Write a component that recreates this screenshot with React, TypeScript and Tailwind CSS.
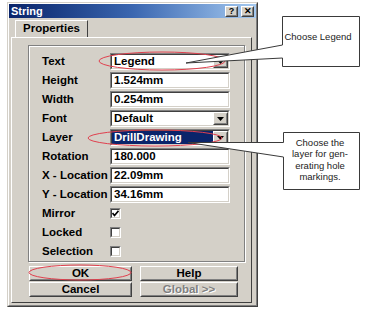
import React from "react";

const font = { fontFamily: '"Liberation Sans", Arial, sans-serif' };

function Sunken({ children, className = "" }: { children?: React.ReactNode; className?: string }) {
    return (
        <div className={`border border-t-[#808080] border-l-[#808080] border-r-white border-b-white ${className}`}>
            <div className="h-full border border-t-[#404040] border-l-[#404040] border-r-[#d4d0c8] border-b-[#d4d0c8]">
                {children}
            </div>
        </div>
    );
}

function Raised({ children, className = "" }: { children?: React.ReactNode; className?: string }) {
    return (
        <div className={`border border-t-white border-l-white border-r-[#404040] border-b-[#404040] bg-[#d4d0c8] ${className}`}>
            <div className="h-full border border-transparent border-r-[#808080] border-b-[#808080] flex items-center justify-center">
                {children}
            </div>
        </div>
    );
}

function Arrow() {
    return (
        <Raised className="w-[15px] h-full">
            <svg width="7" height="4" viewBox="0 0 7 4">
                <path d="M0 0h7L3.5 4z" fill="#000" />
            </svg>
        </Raised>
    );
}

function Field({ value, combo, selected }: { value: string; combo?: boolean; selected?: boolean }) {
    return (
        <Sunken className="w-[120px] h-[17px]">
            <div className="flex h-full bg-white">
                <div className={`flex-1 flex items-center pl-[2px] text-[11.5px] font-bold leading-none ${selected ? "bg-[#0a246a] text-white" : "text-black"}`}>
                    {value}
                </div>
                {combo && <Arrow />}
            </div>
        </Sunken>
    );
}

function Check({ checked }: { checked?: boolean }) {
    return (
        <Sunken className="w-[11px] h-[11px]">
            <div className="h-full bg-white flex items-center justify-center">
                {checked && (
                    <svg width="7" height="7" viewBox="0 0 7 7">
                        <path d="M0.5 3 L2.5 5.5 L6.5 0.8" stroke="#000" strokeWidth="1.6" fill="none" />
                    </svg>
                )}
            </div>
        </Sunken>
    );
}

const rows: { label: string; value?: string; combo?: boolean; selected?: boolean; check?: boolean; checked?: boolean }[] = [
    { label: "Text", value: "Legend", combo: true },
    { label: "Height", value: "1.524mm" },
    { label: "Width", value: "0.254mm" },
    { label: "Font", value: "Default", combo: true },
    { label: "Layer", value: "DrillDrawing", combo: true, selected: true },
    { label: "Rotation", value: "180.000" },
    { label: "X - Location", value: "22.09mm" },
    { label: "Y - Location", value: "34.16mm" },
    { label: "Mirror", check: true, checked: true },
    { label: "Locked", check: true },
    { label: "Selection", check: true },
];

export default function App() {
    return (
        <div className="relative w-[371px] h-[310px] bg-white overflow-hidden" style={font}>
            <div className="ml-[7px] mt-[2px] w-[251px] h-[305px] bg-[#d4d0c8] border border-t-[#d4d0c8] border-l-[#d4d0c8] border-r-[#404040] border-b-[#404040]">
                <div className="h-full border border-t-white border-l-white border-r-[#808080] border-b-[#808080] flex flex-col">
                    {/* title bar */}
                    <div className="h-[14px] bg-gradient-to-r from-[#0a246a] via-[#3a66b0] to-[#a6caf0] flex items-center pl-[2px] pr-[2px]">
                        <span className="text-white font-bold text-[11px] leading-none">String</span>
                        <div className="ml-auto flex gap-[3px]">
                            <Raised className="w-[13px] h-[11px]">
                                <span className="text-[9px] font-bold leading-none">?</span>
                            </Raised>
                            <Raised className="w-[13px] h-[11px]">
                                <span className="text-[9px] font-bold leading-none">✕</span>
                            </Raised>
                        </div>
                    </div>

                    {/* tabs */}
                    <div className="mt-[2px] pl-[6px] flex">
                        <div className="h-[17px] w-[73px] border border-b-0 border-t-white border-l-white border-r-[#404040] flex items-center justify-center text-[11.5px] font-bold leading-none">
                            Properties
                        </div>
                    </div>
                    <div className="ml-[2px] w-[241px] h-[266px] border border-t-white border-l-white border-r-[#404040] border-b-[#404040] flex flex-col">
                        <div className="ml-[16px] mt-[7px] w-[217px] h-[217px] border border-[#808080] shadow-[inset_1px_1px_0_white,1px_1px_0_white] pt-[6px] pl-[13px]">
                            {rows.map((r) => (
                                <div key={r.label} className="h-[19px] flex items-center">
                                    <div className="w-[68px] text-[11.5px] font-bold leading-none whitespace-nowrap">{r.label}</div>
                                    {r.check ? (
                                        <Check checked={r.checked} />
                                    ) : (
                                        <Field value={r.value!} combo={r.combo} selected={r.selected} />
                                    )}
                                </div>
                            ))}
                        </div>
                        <div className="ml-[17px] mt-[4px] grid grid-cols-[103px_98px] gap-x-[8px] gap-y-[1px]">
                            <Raised className="h-[15px] border-t-[#404040] border-l-[#404040]">
                                <span className="text-[11.5px] font-bold leading-none">OK</span>
                            </Raised>
                            <Raised className="h-[15px]">
                                <span className="text-[11.5px] font-bold leading-none">Help</span>
                            </Raised>
                            <Raised className="h-[15px]">
                                <span className="text-[11.5px] font-bold leading-none">Cancel</span>
                            </Raised>
                            <Raised className="h-[15px]">
                                <span className="text-[11.5px] font-bold leading-none text-[#808080] [text-shadow:1px_1px_0_white]">Global &gt;&gt;</span>
                            </Raised>
                        </div>
                    </div>
                </div>
            </div>

            {/* annotations */}
            <svg className="absolute inset-0 pointer-events-none" width="371" height="310" viewBox="0 0 371 310">
                <ellipse cx="162" cy="61" rx="63" ry="9" fill="none" stroke="#e0404e" strokeWidth="1" />
                <ellipse cx="155" cy="138" rx="67" ry="8" fill="none" stroke="#e0404e" strokeWidth="1" />
                <ellipse cx="80" cy="272.5" rx="51" ry="7.5" fill="none" stroke="#e0404e" strokeWidth="1" />

                <path d="M282.5 45 L186 63 L282.5 58 L282.5 66.5 L359.5 66.5 L359.5 16.5 L282.5 16.5 Z" fill="white" stroke="#3a3a3a" strokeWidth="1" />
                <path d="M283.5 142.5 L188 142.5 L283.5 157 L283.5 189.5 L359.5 189.5 L359.5 132.5 L283.5 132.5 Z" fill="white" stroke="#3a3a3a" strokeWidth="1" />

                <g fontFamily='"Liberation Sans", Arial, sans-serif' fontSize="9.5" fill="#222" textAnchor="middle">
                    <text x="318" y="40">Choose Legend</text>
                    <text x="320" y="145.5">Choose the</text>
                    <text x="320" y="157">layer for gen-</text>
                    <text x="320" y="168.5">erating hole</text>
                    <text x="320" y="180">markings.</text>
                </g>
            </svg>
        </div>
    );
}
